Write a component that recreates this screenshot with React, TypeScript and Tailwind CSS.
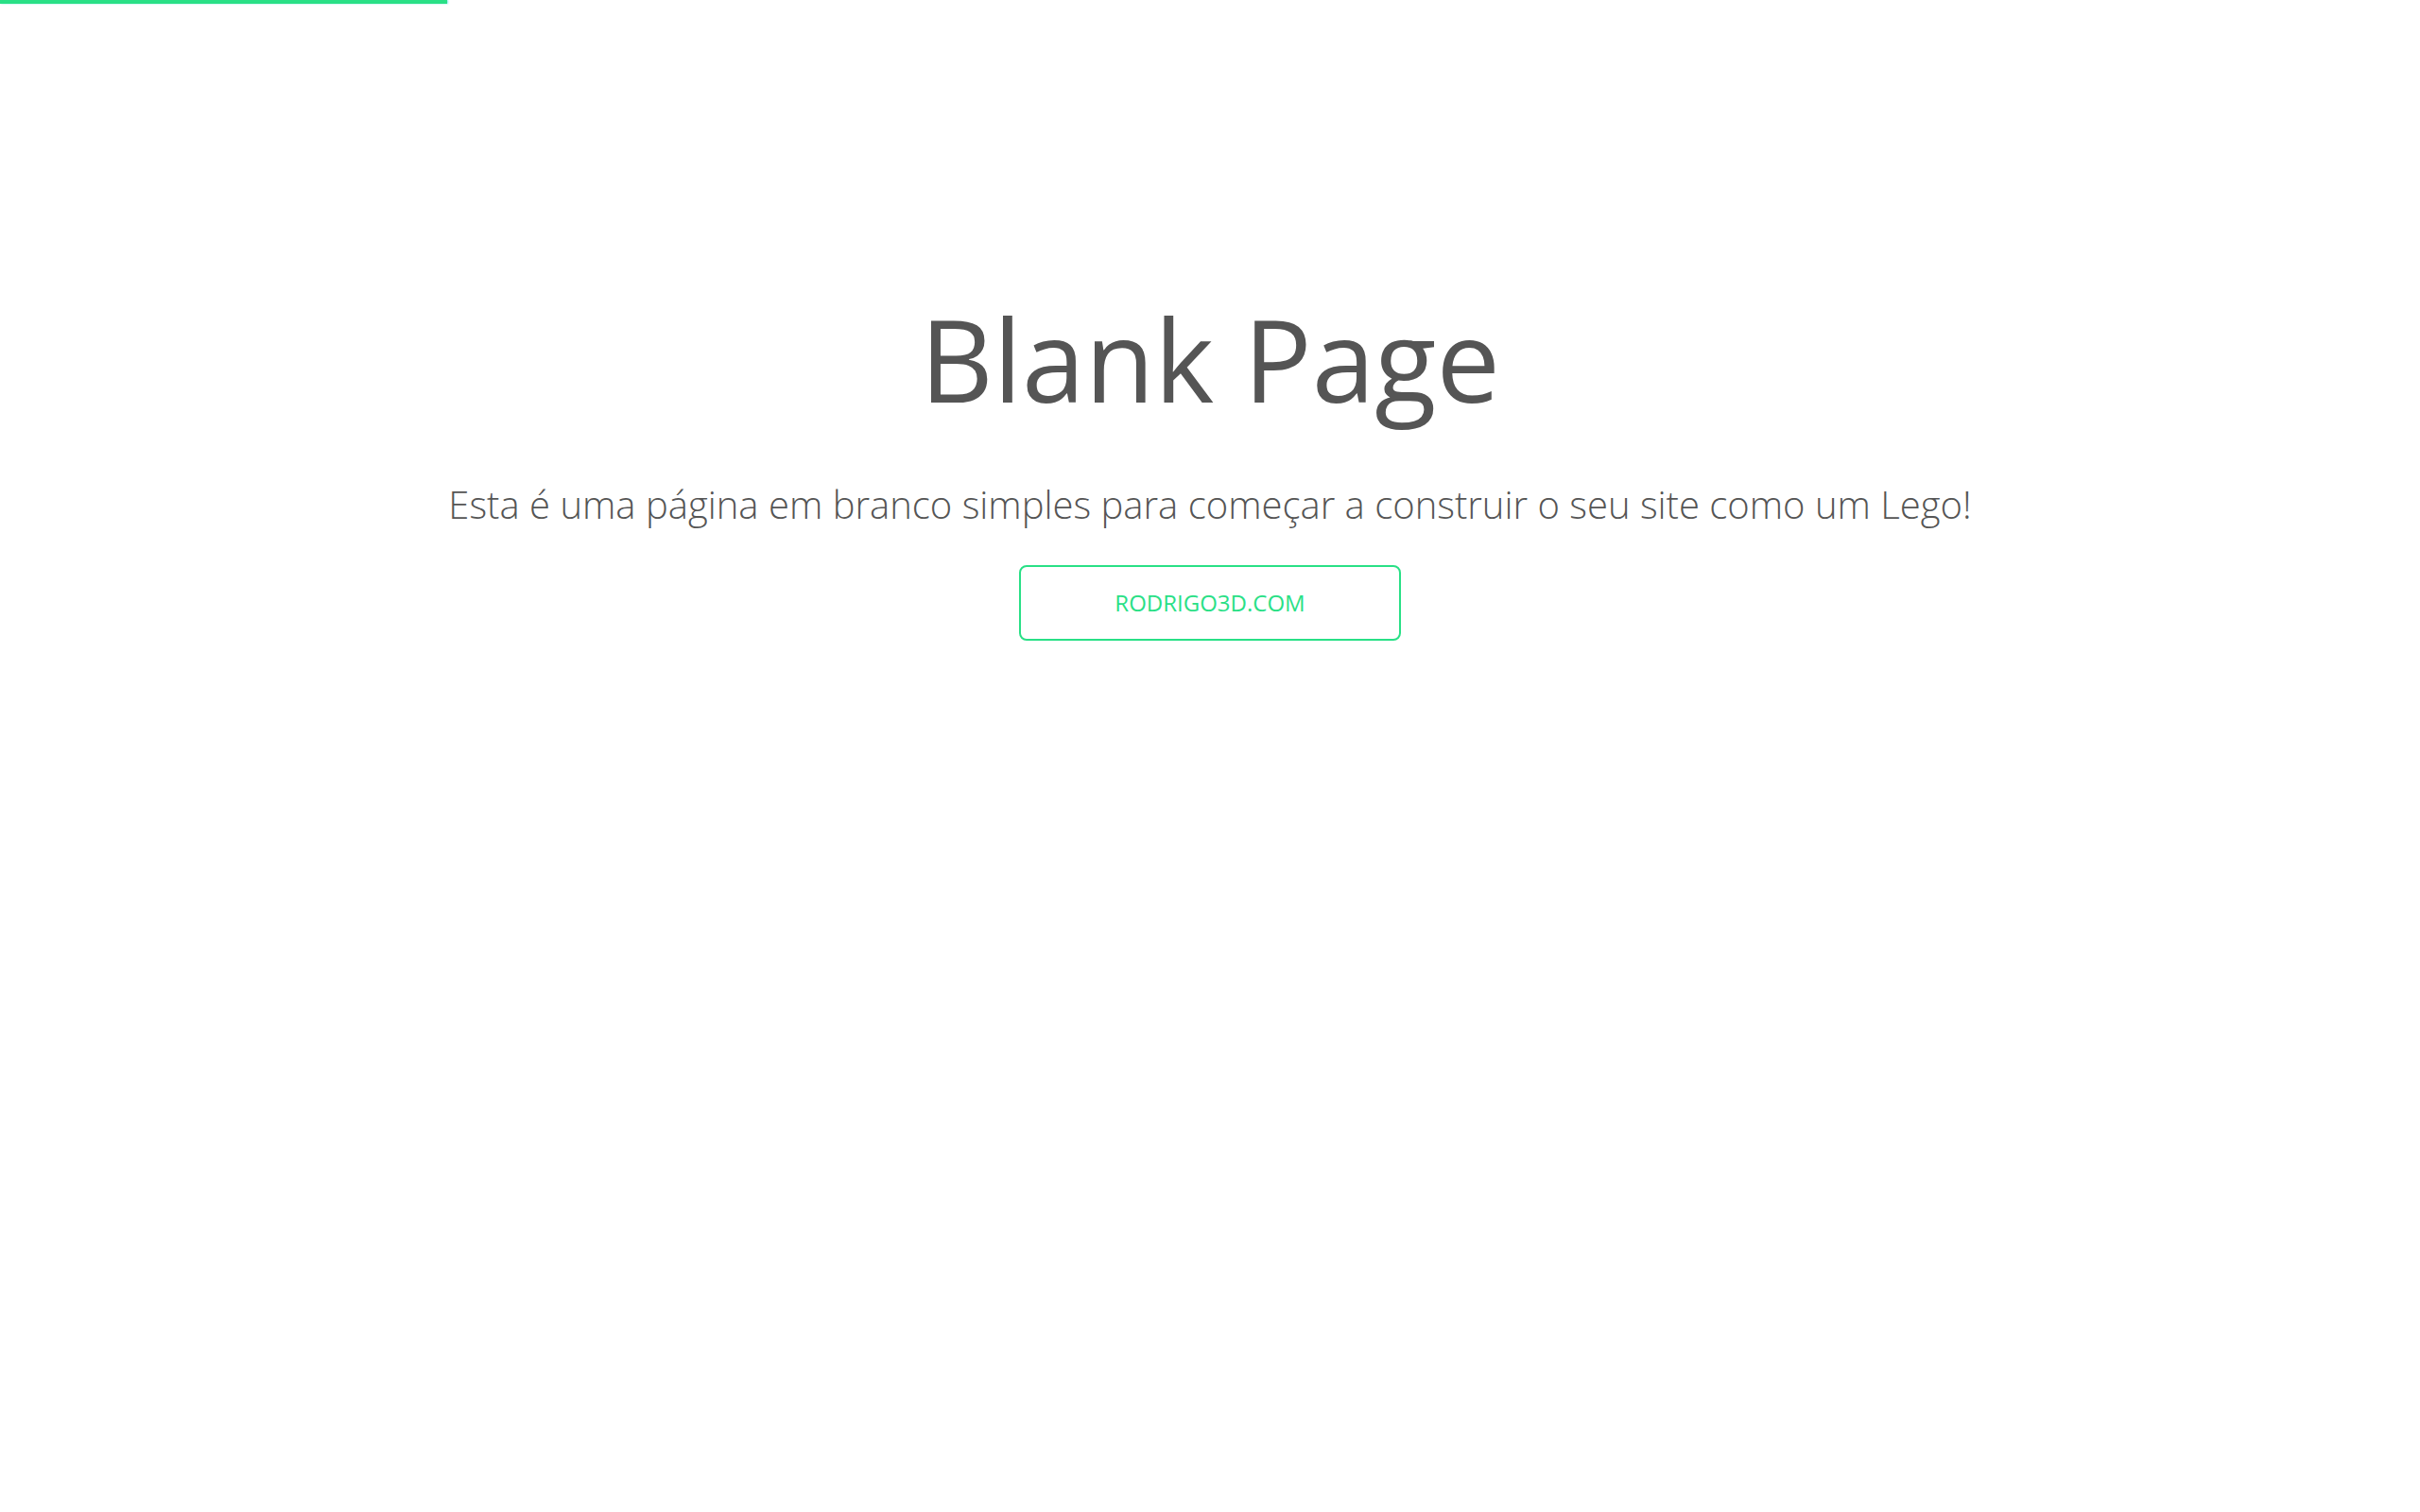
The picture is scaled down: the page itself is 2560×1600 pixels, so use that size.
import React from "react";

export default function App() {
  return (
    <div className="relative min-h-screen w-full bg-white" style={{ fontFamily: '"Open Sans", "Noto Sans", sans-serif' }}>
      <div className="absolute left-0 top-0 h-[4px] w-[473px] bg-[#29e086] shadow-[1px_0_2px_#7fe8f0]" />
      <div className="flex flex-col items-center pt-[320px]">
        <h1 className="text-[120px] leading-[120px] font-normal text-[#555555] font-['Open_Sans',sans-serif]">
          Blank Page
        </h1>
        <p className="mt-[74px] text-[40px] leading-[40px] font-light text-[#555555] font-['Open_Sans',sans-serif]">
          Esta é uma página em branco simples para começar a construir o seu site como um Lego!
        </p>
        <a
          href="#"
          className="mt-[44px] flex h-[80px] w-[404px] items-center justify-center rounded-[8px] border-2 border-[#29e086] text-[24px] font-normal text-[#29e086] font-['Open_Sans',sans-serif]"
        >
          RODRIGO3D.COM
        </a>
      </div>
    </div>
  );
}
